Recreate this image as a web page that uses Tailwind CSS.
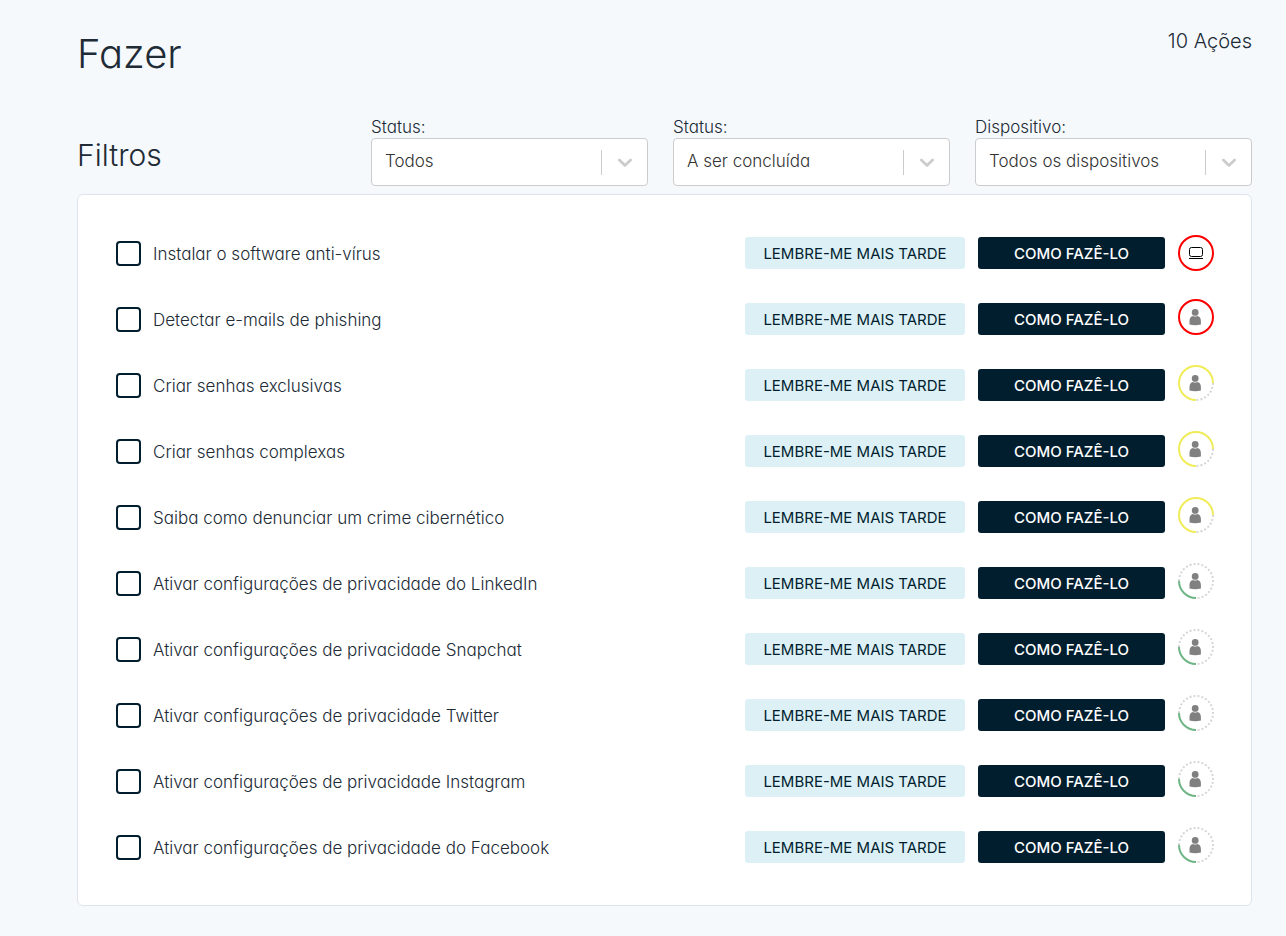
<!doctype html>
<html lang="pt">
    <head>
        <meta charset="utf-8">
        <meta name="viewport" content="width=device-width, initial-scale=1">
        <script src="https://cdn.jsdelivr.net/npm/@tailwindcss/browser@4"></script>
        <title>Fazer</title>
    </head>
    <body class="min-h-screen bg-[#f5f9fc] font-['Inter',sans-serif] font-light text-[#212b36] [font-feature-settings:'cv11']">
        <!-- Shared icons -->
        <svg class="hidden" aria-hidden="true">
            <symbol id="chevron" viewBox="0 0 20 20">
                <path d="M4.516 7.548c0.436-0.446 1.043-0.481 1.576 0l3.908 3.747 3.908-3.747c0.533-0.481 1.141-0.446 1.574 0 0.436 0.445 0.408 1.197 0 1.615-0.406 0.418-4.695 4.502-4.695 4.502-0.217 0.223-0.502 0.335-0.787 0.335s-0.57-0.112-0.789-0.335c0 0-4.287-4.084-4.695-4.502s-0.436-1.17 0-1.615z" fill="#ccc"/>
            </symbol>
            <g id="person" fill="#808080">
                <circle cx="17.2" cy="13.4" r="3.4"/>
                <path d="M11.500 25.500v-3.500c0-3 1.400-4.700 3.400-5 1.400.8 3.200.8 4.600 0 2 .3 3.400 2 3.400 5v3.500q-5.700 1.500-11.400 0z"/>
            </g>
            <symbol id="high-device" viewBox="0 0 36 36">
                <circle cx="18" cy="18" r="17" fill="none" stroke="#f00" stroke-width="2"/>
                <rect x="11.500" y="12.500" width="13" height="9" rx="2" fill="none" stroke="#000"/>
                <path d="M11 23.500h14" stroke="#000"/>
            </symbol>
            <symbol id="high" viewBox="0 0 36 36">
                <circle cx="18" cy="18" r="17" fill="none" stroke="#f00" stroke-width="2"/>
                <use href="#person"/>
            </symbol>
            <symbol id="medium" viewBox="0 0 36 36">
                <path d="M35 18A17 17 0 0 1 18 35" fill="none" stroke="#d6d6d6" stroke-width="2" stroke-dasharray="2 2"/>
                <path d="M18 35A17 17 0 1 1 35 18" fill="none" stroke="#f0ec5a" stroke-width="2"/>
                <use href="#person"/>
            </symbol>
            <symbol id="low" viewBox="0 0 36 36">
                <path d="M1 18A17 17 0 1 1 18 35" fill="none" stroke="#d6d6d6" stroke-width="2" stroke-dasharray="2 2"/>
                <path d="M18 35A17 17 0 0 1 1 18" fill="none" stroke="#6fb586" stroke-width="2"/>
                <use href="#person"/>
            </symbol>
        </svg>

        <main class="pt-6 pr-[34px] pb-[30px] pl-[77px]">
            <header class="flex items-start justify-between">
                <h1 class="text-[40px] leading-[60px]">Fazer</h1>
                <p class="text-[20px] leading-[34px]">10 Ações</p>
            </header>

            <!-- Filters -->
            <section class="mt-8 mb-2 grid grid-cols-[269fr_277fr_277fr_277fr] gap-x-[25px]">
                <h2 class="self-center pt-2 text-[30px] leading-10">Filtros</h2>
                <div>
                    <label for="priority" class="block text-[17px] leading-[22px]">Status:</label>
                    <div class="grid items-center">
                        <select id="priority" class="col-start-1 row-start-1 h-12 w-full appearance-none rounded border border-[#ccc] bg-white px-[13px] text-[17px] text-[#333]">
                            <option>Todos</option>
                        </select>
                        <div class="pointer-events-none col-start-1 row-start-1 flex items-center justify-self-end pr-[11px]">
                            <span class="mr-[11px] h-[25px] w-px bg-[#ccc]"></span>
                            <svg class="size-6"><use href="#chevron"/></svg>
                        </div>
                    </div>
                </div>
                <div>
                    <label for="status" class="block text-[17px] leading-[22px]">Status:</label>
                    <div class="grid items-center">
                        <select id="status" class="col-start-1 row-start-1 h-12 w-full appearance-none rounded border border-[#ccc] bg-white px-[13px] text-[17px] text-[#333]">
                            <option>A ser concluída</option>
                        </select>
                        <div class="pointer-events-none col-start-1 row-start-1 flex items-center justify-self-end pr-[11px]">
                            <span class="mr-[11px] h-[25px] w-px bg-[#ccc]"></span>
                            <svg class="size-6"><use href="#chevron"/></svg>
                        </div>
                    </div>
                </div>
                <div>
                    <label for="device" class="block text-[17px] leading-[22px]">Dispositivo:</label>
                    <div class="grid items-center">
                        <select id="device" class="col-start-1 row-start-1 h-12 w-full appearance-none rounded border border-[#ccc] bg-white px-[13px] text-[17px] text-[#333]">
                            <option>Todos os dispositivos</option>
                        </select>
                        <div class="pointer-events-none col-start-1 row-start-1 flex items-center justify-self-end pr-[11px]">
                            <span class="mr-[11px] h-[25px] w-px bg-[#ccc]"></span>
                            <svg class="size-6"><use href="#chevron"/></svg>
                        </div>
                    </div>
                </div>
            </section>

            <!-- Actions -->
            <ul id="actions" class="rounded-md border border-[#dde4ec] bg-white py-[25px] pr-[37px] pl-[38px]"></ul>
        </main>

        <template id="action-row">
            <li class="flex h-[66px] items-center">
                <input type="checkbox" class="size-[25px] shrink-0 appearance-none rounded border-2 border-[#001e2e] bg-white checked:bg-[#001e2e]">
                <label class="flex-1 pt-0.5 pl-3 text-[17px] leading-6"></label>
                <button type="button" class="mr-[13px] h-8 w-[220px] rounded-[3px] bg-[#ddf0f6] pt-0.5 text-[15px] font-normal text-[#001e2e]">LEMBRE-ME MAIS TARDE</button>
                <button type="button" class="mr-[13px] h-8 w-[187px] rounded-[3px] bg-[#001e2e] pt-0.5 text-[15px] font-medium text-white">COMO FAZÊ-LO</button>
                <svg class="size-9" aria-hidden="true"><use/></svg>
            </li>
        </template>

        <script>
            const actions = [
                ['Instalar o software anti-vírus', 'high-device'],
                ['Detectar e-mails de phishing', 'high'],
                ['Criar senhas exclusivas', 'medium'],
                ['Criar senhas complexas', 'medium'],
                ['Saiba como denunciar um crime cibernético', 'medium'],
                ['Ativar configurações de privacidade do LinkedIn', 'low'],
                ['Ativar configurações de privacidade Snapchat', 'low'],
                ['Ativar configurações de privacidade Twitter', 'low'],
                ['Ativar configurações de privacidade Instagram', 'low'],
                ['Ativar configurações de privacidade do Facebook', 'low'],
            ];
            const list = document.getElementById('actions');
            const template = document.getElementById('action-row');

            actions.forEach(([title, icon], i) => {
                const row = template.content.cloneNode(true);
                const label = row.querySelector('label');
                row.querySelector('input').id = 'action-' + i;
                label.htmlFor = 'action-' + i;
                label.textContent = title;
                row.querySelector('use').setAttribute('href', '#' + icon);
                // person icons sit a little higher than the device icon
                if (icon !== 'high-device') row.querySelector('svg').classList.add('mb-1');
                list.appendChild(row);
            });
        </script>
    </body>
</html>
